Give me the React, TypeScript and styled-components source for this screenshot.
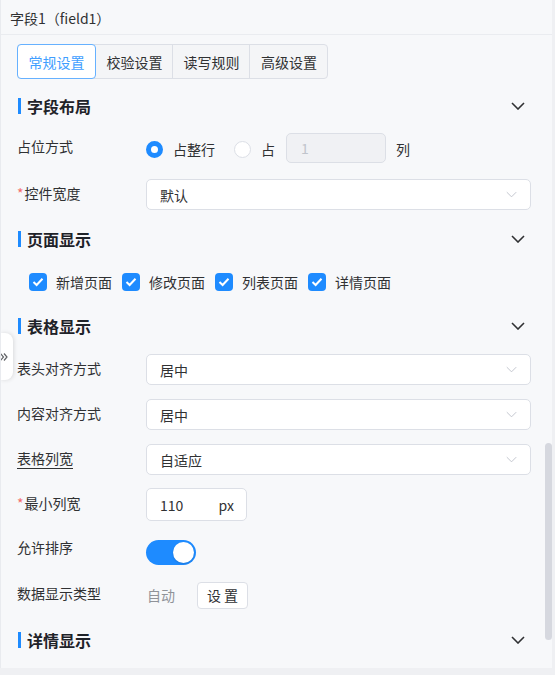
import React from 'react'
import styled, { createGlobalStyle } from 'styled-components'

const GlobalStyle = createGlobalStyle`
  html, body {
    margin: 0;
    padding: 0;
    background: #eff0f3;
    font-family: "Noto Sans CJK SC", "Noto Sans", sans-serif;
    color: #303133;
  }
`

const BLUE = '#1e8bff'

const ChevronDown = ({ color = '#303133', w = 14, h = 8, sw = 1.6 }: { color?: string; w?: number; h?: number; sw?: number }) => (
  <svg width={w} height={h} viewBox="0 0 14 8" fill="none">
    <path d="M1 1 L7 7 L13 1" stroke={color} strokeWidth={sw} strokeLinejoin="miter" />
  </svg>
)

const tabs = ['常规设置', '校验设置', '读写规则', '高级设置']
const pages = ['新增页面', '修改页面', '列表页面', '详情页面']

const SectionHead = ({ title, top }: { title: string; top: number }) => (
  <Section $top={top}>
    <SectionTitle>{title}</SectionTitle>
    <ChevronDown />
  </Section>
)

const Select = ({ value }: { value: string }) => (
  <SelectBox>
    <span>{value}</span>
    <ChevronDown color="#c0c4cc" w={11} h={7} sw={1.2} />
  </SelectBox>
)

const App: React.FC = () => {
  return (
    <Panel>
      <GlobalStyle />
      <Header>字段1（field1）</Header>
      <Body>
        <Tabs>
          {tabs.map((t, i) => (
            <Tab key={t} $active={i === 0}>{t}</Tab>
          ))}
        </Tabs>

        <SectionHead title="字段布局" top={12} />
        <FormRow $top={12} $h={30}>
          <Label>占位方式</Label>
          <Radio $checked />
          <OptText>占整行</OptText>
          <Radio $gap={19} />
          <OptText>占</OptText>
          <DisabledInput>1</DisabledInput>
          <OptText>列</OptText>
        </FormRow>
        <FormRow $top={16} $h={31}>
          <Label><Star>*</Star>控件宽度</Label>
          <Select value="默认" />
        </FormRow>

        <SectionHead title="页面显示" top={14} />
        <CheckRow>
          {pages.map(p => (
            <CheckItem key={p}>
              <CheckBox>
                <svg width="12" height="10" viewBox="0 0 12 10" fill="none">
                  <path d="M1.5 5 L4.6 8 L10.5 1.8" stroke="#fff" strokeWidth="2" />
                </svg>
              </CheckBox>
              {p}
            </CheckItem>
          ))}
        </CheckRow>

        <SectionHead title="表格显示" top={14} />
        <FormRow $top={13} $h={31}>
          <Label>表头对齐方式</Label>
          <Select value="居中" />
        </FormRow>
        <FormRow $top={14} $h={31}>
          <Label>内容对齐方式</Label>
          <Select value="居中" />
        </FormRow>
        <FormRow $top={14} $h={31}>
          <Label $underline>表格列宽</Label>
          <Select value="自适应" />
        </FormRow>
        <FormRow $top={13} $h={33}>
          <Label><Star>*</Star>最小列宽</Label>
          <UnitInput>
            <span>110</span>
            <span>px</span>
          </UnitInput>
        </FormRow>
        <FormRow $top={16} $h={31} $align="flex-start">
          <Label $lh={22}>允许排序</Label>
          <Switch>
            <Knob />
          </Switch>
        </FormRow>
        <FormRow $top={12} $h={30}>
          <Label>数据显示类型</Label>
          <AutoText>自动</AutoText>
          <SetButton>设 置</SetButton>
        </FormRow>

        <SectionHead title="详情显示" top={15} />
      </Body>

      <Handle>
        <svg width="8" height="10" viewBox="0 0 8 10" fill="none">
          <path d="M0.5 1.5 L3.5 5 L0.5 8.5 M4 1.5 L7 5 L4 8.5" stroke="#606266" strokeWidth="1.2" />
        </svg>
      </Handle>
      <ScrollThumb />
    </Panel>
  )
}

export default App

const Panel = styled.div`
  position: relative;
  width: 551px;
  height: 668px;
  background: #f7f8fa;
  border-left: 1px solid #e9ebef;
  overflow: hidden;
`

const Header = styled.div`
  height: 34px;
  line-height: 36px;
  padding-left: 9px;
  font-size: 14px;
  color: #303133;
  border-bottom: 1px solid #eaecf0;
`

const Body = styled.div`
  display: flex;
  flex-direction: column;
  padding: 9px 21px 0 16px;
`

const Tabs = styled.div`
  display: flex;
  align-self: flex-start;
  height: 35px;
  background: #f4f5f7;
  border: 1px solid #dcdfe6;
  border-radius: 4px;
  box-sizing: border-box;
`

const Tab = styled.div<{ $active?: boolean }>`
  width: ${p => (p.$active ? 79 : 77)}px;
  height: 35px;
  margin-top: -1px;
  box-sizing: border-box;
  display: flex;
  align-items: center;
  justify-content: center;
  font-size: 14px;
  color: ${p => (p.$active ? '#409eff' : '#303133')};
  background: ${p => (p.$active ? '#fff' : 'transparent')};
  border: 1px solid ${p => (p.$active ? '#66b1ff' : 'transparent')};
  border-right: 1px solid ${p => (p.$active ? '#66b1ff' : '#dcdfe6')};
  border-radius: ${p => (p.$active ? '4px' : '0')};
  margin-left: ${p => (p.$active ? '-1px' : '0')};

  &:last-child {
    border-right: none;
  }
`

const Section = styled.div<{ $top: number }>`
  margin-top: ${p => p.$top}px;
  height: 30px;
  display: flex;
  align-items: center;
  justify-content: space-between;
  padding-right: 6px;
`

const SectionTitle = styled.div`
  font-size: 16px;
  font-weight: 700;
  color: #1f2329;
  border-left: 3px solid ${BLUE};
  padding-left: 6px;
  height: 16px;
  line-height: 16px;
  margin-left: 1px;
`

const FormRow = styled.div<{ $top: number; $h: number; $align?: string }>`
  margin-top: ${p => p.$top}px;
  height: ${p => p.$h}px;
  display: flex;
  align-items: ${p => p.$align || 'center'};
`

const Label = styled.div<{ $underline?: boolean; $lh?: number }>`
  width: 129px;
  flex-shrink: 0;
  font-size: 14px;
  color: #303133;
  line-height: ${p => (p.$lh ? `${p.$lh}px` : '20px')};
  margin-top: ${p => (p.$lh ? -1 : -4)}px;
  text-decoration: ${p => (p.$underline ? 'underline' : 'none')};
  text-underline-offset: 4px;
`

const Star = styled.span`
  color: #f56c6c;
  margin-right: 1px;
`

const Radio = styled.div<{ $checked?: boolean; $gap?: number }>`
  width: 17px;
  height: 17px;
  box-sizing: border-box;
  border-radius: 50%;
  margin-left: ${p => p.$gap || 0}px;
  background: #fff;
  border: ${p => (p.$checked ? `5px solid ${BLUE}` : '1px solid #dcdfe6')};
  margin-top: 3px;
`

const OptText = styled.span`
  font-size: 14px;
  color: #303133;
  margin-left: 10px;
  margin-top: 2px;
`

const DisabledInput = styled.div`
  width: 100px;
  height: 30px;
  box-sizing: border-box;
  margin-left: 11px;
  padding-left: 14px;
  display: flex;
  align-items: center;
  font-size: 14px;
  color: #c0c4cc;
  background: #f0f1f4;
  border: 1px solid #dcdfe6;
  border-radius: 5px;
`

const SelectBox = styled.div`
  flex: 1;
  height: 31px;
  box-sizing: border-box;
  display: flex;
  align-items: center;
  justify-content: space-between;
  padding: 0 13px 0 13px;
  font-size: 14px;
  color: #303133;
  background: #fff;
  border: 1px solid #dcdfe6;
  border-radius: 5px;
`

const CheckRow = styled.div`
  margin-top: 13px;
  height: 30px;
  display: flex;
  align-items: center;
  padding-left: 12px;
  gap: 10px;
`

const CheckItem = styled.label`
  display: flex;
  align-items: center;
  gap: 9px;
  font-size: 14px;
  color: #303133;
`

const CheckBox = styled.span`
  width: 18px;
  height: 18px;
  border-radius: 4px;
  background: ${BLUE};
  display: flex;
  align-items: center;
  justify-content: center;
`

const UnitInput = styled.div`
  width: 101px;
  height: 33px;
  box-sizing: border-box;
  display: flex;
  align-items: center;
  justify-content: space-between;
  padding: 0 12px 0 13px;
  font-size: 14px;
  color: #303133;
  background: #fff;
  border: 1px solid #dcdfe6;
  border-radius: 5px;
`

const Switch = styled.div`
  margin-top: 3px;
  width: 50px;
  height: 25px;
  border-radius: 13px;
  background: ${BLUE};
  display: flex;
  align-items: center;
  justify-content: flex-end;
  padding-right: 2px;
  box-sizing: border-box;
`

const Knob = styled.div`
  width: 21px;
  height: 21px;
  border-radius: 50%;
  background: #fff;
  box-shadow: 0 1px 2px rgba(0, 0, 0, 0.15);
`

const AutoText = styled.span`
  font-size: 14px;
  color: #909399;
  margin-left: 1px;
  margin-top: -1px;
`

const SetButton = styled.div`
  margin-left: 22px;
  width: 51px;
  height: 27px;
  box-sizing: border-box;
  display: flex;
  align-items: center;
  justify-content: center;
  font-size: 14px;
  color: #303133;
  background: #fff;
  border: 1px solid #dcdfe6;
  border-radius: 4px;
`

const Handle = styled.div`
  position: absolute;
  left: -1px;
  top: 333px;
  width: 13px;
  height: 47px;
  background: #fff;
  border-radius: 0 8px 8px 0;
  box-shadow: 1px 0 4px rgba(0, 0, 0, 0.12);
  display: flex;
  align-items: center;
  justify-content: flex-start;
`

const ScrollThumb = styled.div`
  position: absolute;
  right: 0;
  top: 443px;
  width: 7px;
  height: 197px;
  border-radius: 4px;
  background: #d6d8df;
`
